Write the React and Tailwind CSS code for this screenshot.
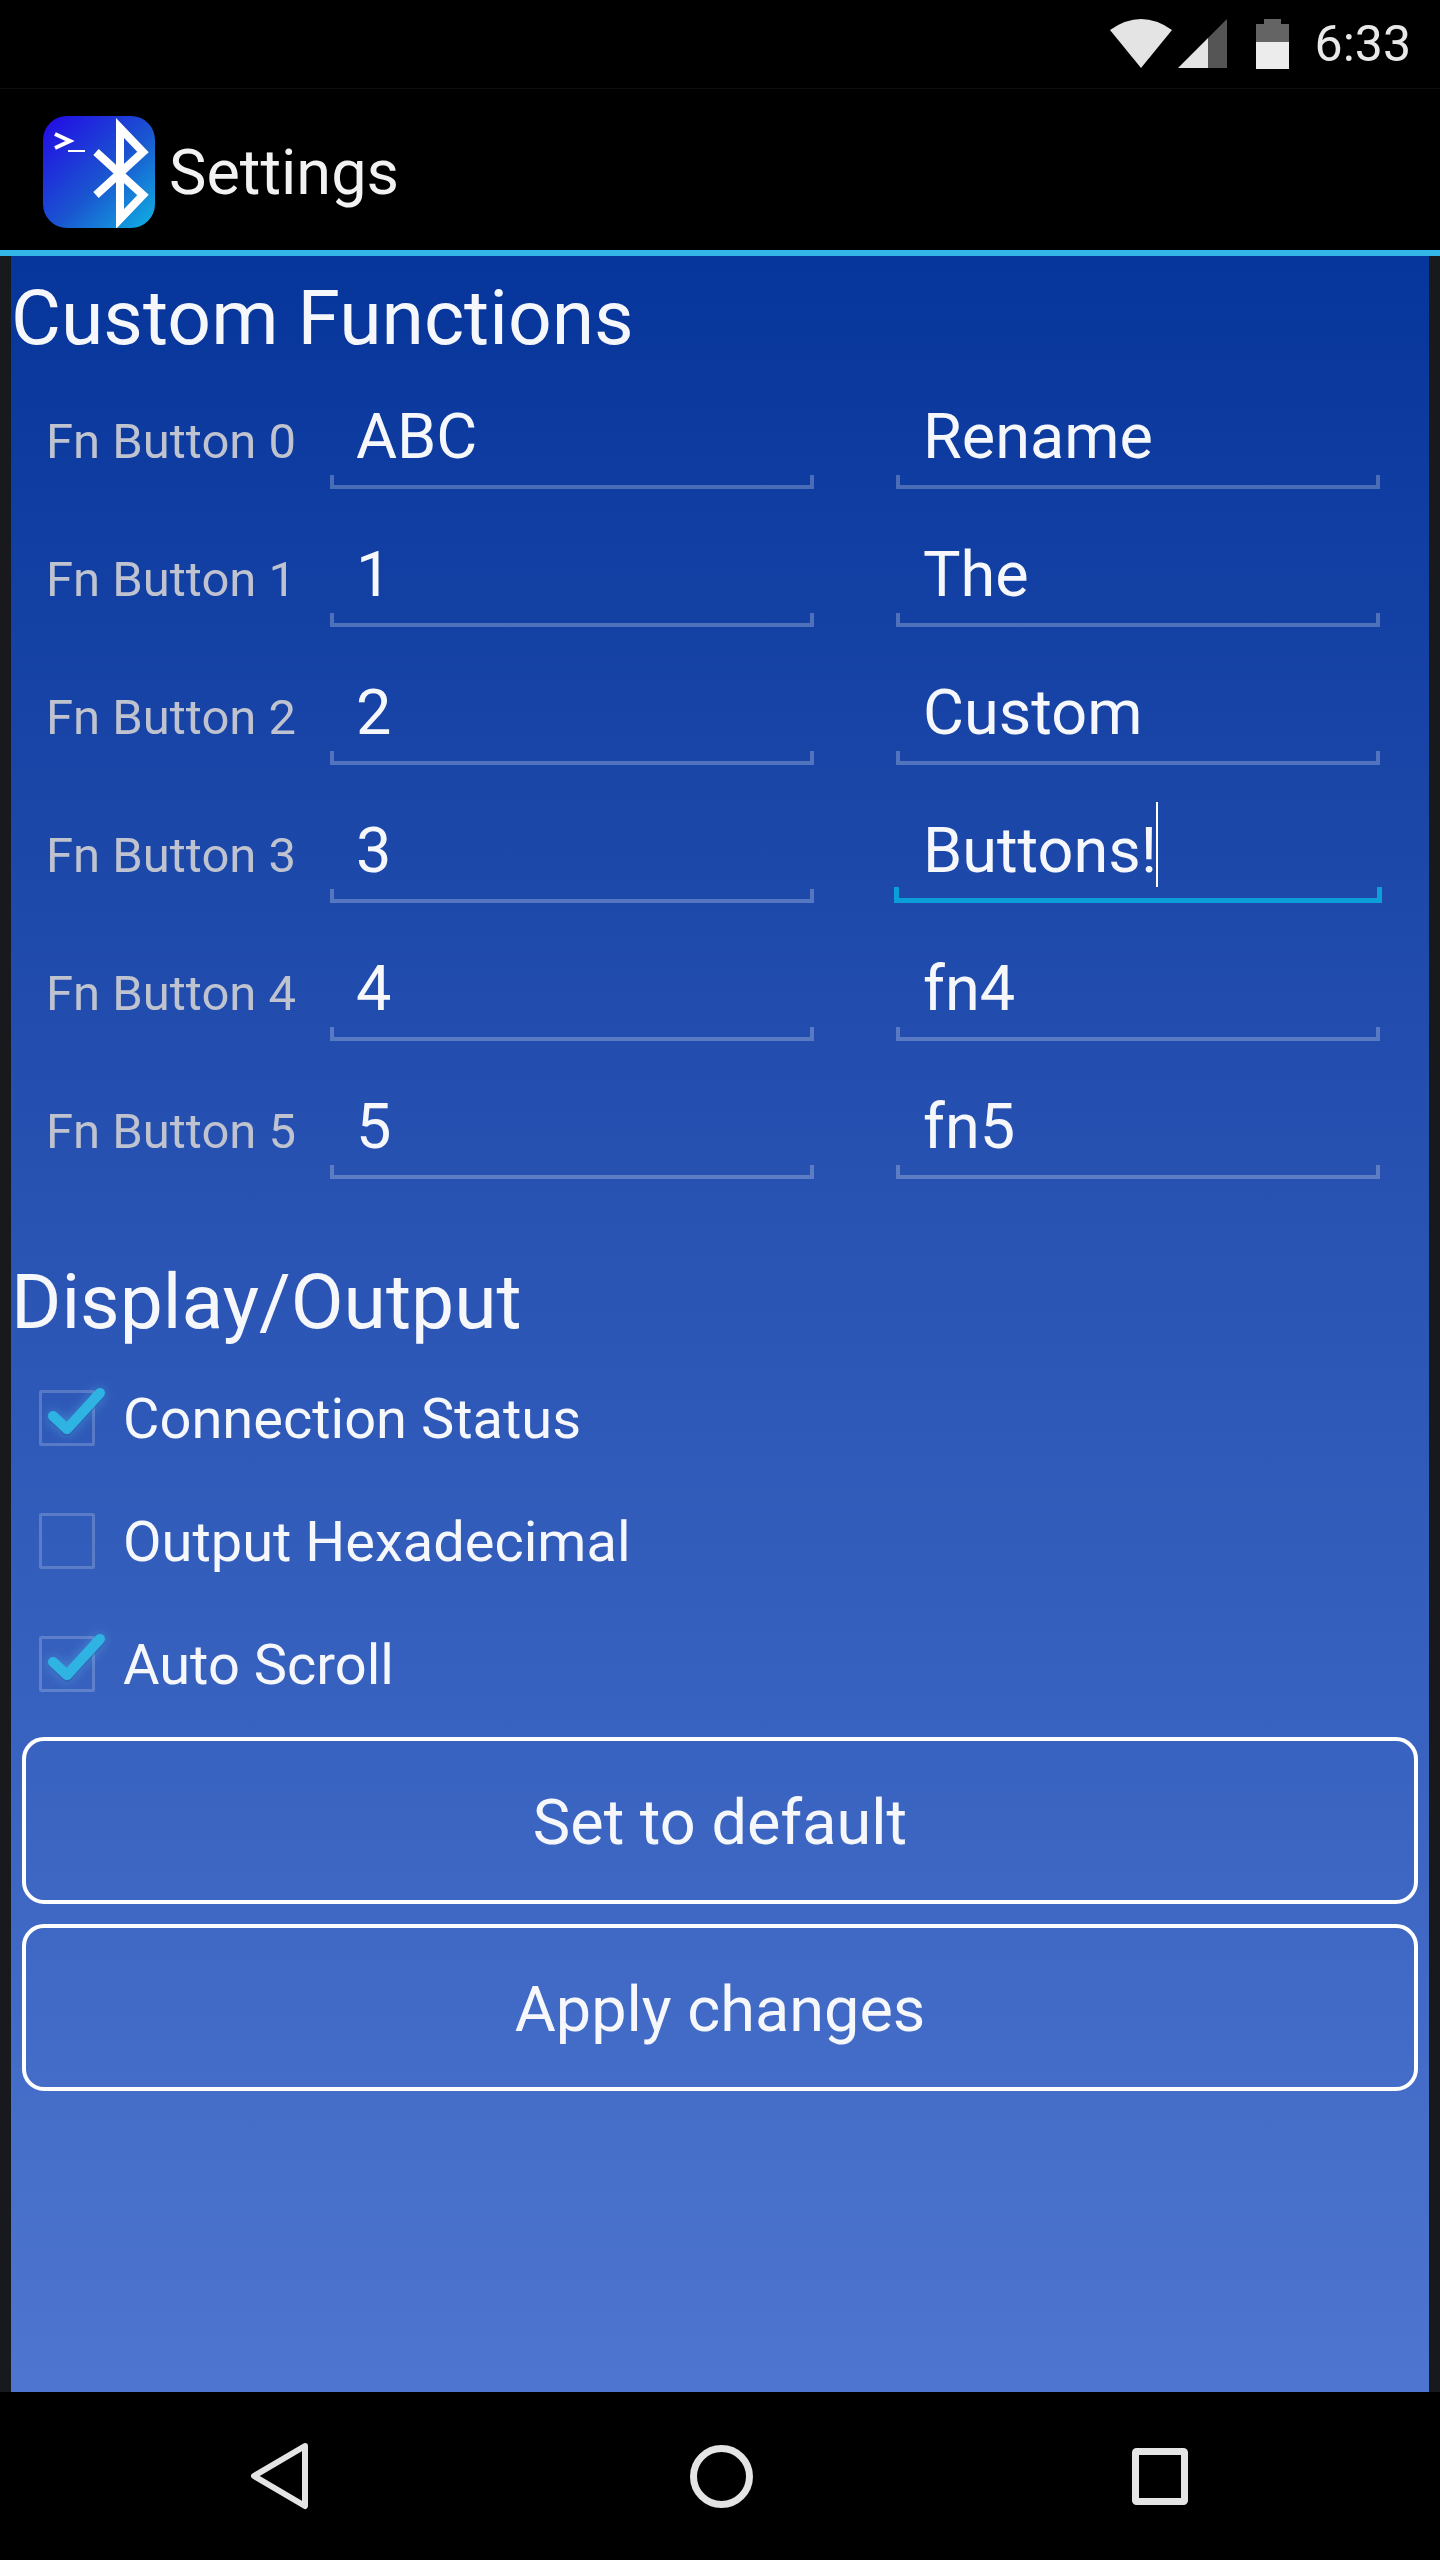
import React from 'react';

const font = { fontFamily: 'Roboto, sans-serif' };

const FIELDS = [
  ['Fn Button 0', 'ABC', 'Rename'],
  ['Fn Button 1', '1', 'The'],
  ['Fn Button 2', '2', 'Custom'],
  ['Fn Button 3', '3', 'Buttons!'],
  ['Fn Button 4', '4', 'fn4'],
  ['Fn Button 5', '5', 'fn5'],
];

const Field = ({ value, focused, inset = 'pl-[27px]' }) => (
  <div className="w-[484px] h-[138px] flex flex-col justify-end">
    <div className={`flex-1 flex items-end ${inset} ${focused ? 'pb-[1px]' : 'pb-[3px]'}`}>
      <span className="text-[63px] leading-[70px] text-[#f6f7fb]">{value}</span>
      {focused && <span className="w-[2px] h-[85px] bg-white -ml-[1px] -mb-[1px]" />}
    </div>
    {focused
      ? <div className="h-[16px] -mx-[2px] border-x-[5px] border-b-[5px] border-[#0a9fd8]" />
      : <div className="h-[14px] border-x-[4px] border-b-[4px] border-white/25" />}
  </div>
);

const Row = ({ label, a, b, focused }) => (
  <div className="flex items-end h-[138px]">
    <div className="w-[319px] pl-[35px] pb-[17px] text-[49px] leading-[60px] text-[#bfc3cf]">{label}</div>
    <Field value={a} inset="pl-[26px]" />
    <div className="w-[82px]" />
    <Field value={b} focused={focused} />
  </div>
);

const Check = ({ label, on }) => (
  <div className="flex items-center h-[123px]">
    <div className="relative ml-[28px] w-[56px] h-[56px] border-[3px] border-white/20 rounded-[2px] shrink-0">
      {on && (
        <svg className="absolute -left-[3px] -top-[3px] overflow-visible drop-shadow-[0_0_6px_rgba(90,190,240,0.45)]" width="72" height="50" viewBox="0 0 72 50" fill="none">
          <path d="M14 28 L28 41 L61 5" stroke="#2a5fa8" strokeWidth="10" strokeLinecap="round" strokeLinejoin="round" opacity="0.5" />
          <path d="M14 26 L28 39 L61 3" stroke="#2fb3e3" strokeWidth="10" strokeLinecap="round" strokeLinejoin="round" />
        </svg>
      )}
    </div>
    <span className="ml-[28px] mt-[3px] text-[56px] leading-[64px] text-[#f6f7fb]">{label}</span>
  </div>
);

const Btn = ({ children }) => (
  <div className="h-[167px] border-[4px] border-white rounded-[22px] flex items-center justify-center pt-[6px] text-[63px] text-[#f6f7fb]">
    {children}
  </div>
);

export default function App() {
  return (
    <div className="w-[1440px] h-[2560px] flex flex-col bg-black" style={font}>
      <div className="h-[89px] flex items-center justify-end border-b border-[#0e0e0e] bg-black">
        <svg width="62" height="50" viewBox="0 0 62 50" className="mr-[6px]">
          <path d="M0 11 Q31 -11 62 11 L31 49 Z" fill="#e4e4e4" />
        </svg>
        <svg width="50" height="50" viewBox="0 0 50 50" className="mr-[28px]">
          <path d="M0 49 L30 19 L30 49 Z" fill="#e4e4e4" />
          <path d="M30 19 L49 0 L49 49 L30 49 Z" fill="#555" />
        </svg>
        <svg width="33" height="50" viewBox="0 0 33 50" className="mr-[26px]">
          <path d="M8 0 H25 V5 H33 V23 H0 V5 H8 Z" fill="#646464" />
          <rect x="0" y="23" width="33" height="27" fill="#ececec" />
        </svg>
        <span className="text-[50px] leading-[50px] text-[#e8e8e8] mr-[29px]">6:33</span>
      </div>

      <div className="h-[161px] flex items-center pl-[43px] pt-[5px]">
        <svg width="112" height="112" viewBox="0 0 112 112">
          <defs>
            <linearGradient id="logo" x1="0" y1="0" x2="1" y2="1">
              <stop offset="0" stopColor="#2308e6" />
              <stop offset="0.55" stopColor="#1a55d0" />
              <stop offset="1" stopColor="#0fb2e2" />
            </linearGradient>
          </defs>
          <rect width="112" height="112" rx="24" fill="url(#logo)" />
          <path d="M53 36 L100 79 L77 103 L77 12 L100 36 L53 79" fill="none" stroke="#fff" strokeWidth="8" />
          <path d="M12 18 L27 25 L12 32" fill="none" stroke="#fff" strokeWidth="4" />
          <path d="M25 35 H42" stroke="#fff" strokeWidth="2" />
        </svg>
        <span className="ml-[14px] mt-[2px] text-[63px] leading-[70px] text-[#f2f2f2]">Settings</span>
      </div>

      <div className="h-[6px] bg-[#33b5e5]" />

      <div className="h-[2136px] flex px-[11px] bg-[#17191d]">
        <div className="flex-1 flex flex-col bg-gradient-to-b from-[#06359b] to-[#4e76d0]">
          <h2 className="h-[95px] pt-[20px] text-[76.8px] leading-[85px] text-[#f6f7fb] font-normal">Custom Functions</h2>
          {FIELDS.map(([label, a, b], i) => (
            <Row key={label} label={label} a={a} b={b} focused={i === 3} />
          ))}
          <h2 className="h-[177px] pt-[81px] text-[76.8px] leading-[85px] text-[#f6f7fb] font-normal">Display/Output</h2>
          <Check label="Connection Status" on />
          <Check label="Output Hexadecimal" />
          <Check label="Auto Scroll" on />
          <div className="mt-[12px] ml-[11px] w-[1396px] flex flex-col gap-[20px]">
            <Btn>Set to default</Btn>
            <Btn>Apply changes</Btn>
          </div>
        </div>
      </div>

      <div className="flex-1 flex items-center justify-between bg-black pl-[250px] pr-[252px]">
        <svg width="60" height="68" viewBox="0 0 60 68" fill="none" stroke="#e4e4e4" strokeWidth="6" strokeLinejoin="round">
          <path d="M55 4 L4 34 L55 64 Z" />
        </svg>
        <svg width="63" height="63" viewBox="0 0 63 63" fill="none" stroke="#e4e4e4" strokeWidth="7">
          <circle cx="31.5" cy="31.5" r="28" />
        </svg>
        <svg width="56" height="57" viewBox="0 0 56 57" fill="none" stroke="#e4e4e4" strokeWidth="7" strokeLinejoin="round">
          <rect x="3.5" y="3.5" width="49" height="50" rx="1" />
        </svg>
      </div>
    </div>
  );
}
